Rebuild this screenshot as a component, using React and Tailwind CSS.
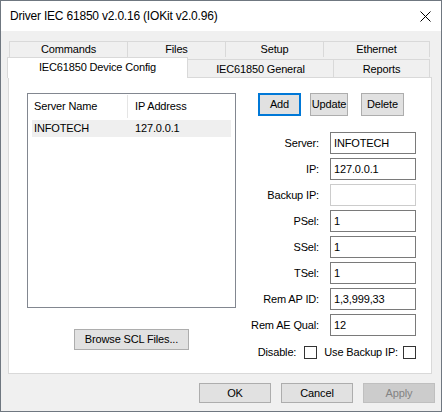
import React from "react";

const fields = [
  { label: "Server:", value: "INFOTECH" },
  { label: "IP:", value: "127.0.0.1" },
  { label: "Backup IP:", value: "", disabled: true },
  { label: "PSel:", value: "1" },
  { label: "SSel:", value: "1" },
  { label: "TSel:", value: "1" },
  { label: "Rem AP ID:", value: "1,3,999,33" },
  { label: "Rem AE Qual:", value: "12" },
];

const Field = ({ label, value, disabled }) => (
  <div className="flex items-center justify-end h-[22px]">
    <span className="whitespace-nowrap mr-[11px]">{label}</span>
    <div
      className={
        "shrink-0 w-[86px] h-[22px] bg-white border px-[3px] pt-[2px] leading-[16px] " +
        (disabled ? "border-[#cccccc]" : "border-[#7a7a7a]")
      }
    >
      {value}
    </div>
  </div>
);

const Checkbox = () => (
  <div className="shrink-0 w-[13px] h-[13px] border border-[#333333] bg-white" />
);

const App = () => {
  return (
    <div className="w-[442px] h-[412px] bg-[#f0f0f0] border border-[#6f7780] flex flex-col font-['Liberation_Sans',Arial,sans-serif] text-[11px] tracking-[-0.15px] text-black overflow-hidden">
      {/* title bar */}
      <div className="h-[30px] bg-white flex items-center justify-between pl-[9px] pr-[9px] shrink-0">
        <span className="text-[12px] tracking-[-0.2px]">Driver IEC 61850 v2.0.16 (IOKit v2.0.96)</span>
        <svg width="11" height="11" viewBox="0 0 11 11" className="mr-[1px]">
          <path d="M0.5 0.5 L10.5 10.5 M10.5 0.5 L0.5 10.5" stroke="#000" strokeWidth="1" />
        </svg>
      </div>

      {/* tabs */}
      <div className="pt-[10px] pl-[6px] flex flex-col">
        <div className="flex ml-[2px] h-[16px]">
          <div className="w-[119px] border border-b-0 border-[#d9d9d9] flex items-center justify-center">Commands</div>
          <div className="w-[98px] border border-b-0 border-l-0 border-[#d9d9d9] flex items-center justify-center">Files</div>
          <div className="w-[98px] border border-b-0 border-l-0 border-[#d9d9d9] flex items-center justify-center">Setup</div>
          <div className="w-[106px] border border-b-0 border-l-0 border-[#d9d9d9] flex items-center justify-center">Ethernet</div>
        </div>
        <div className="flex items-end h-[21px] -mb-px relative z-10">
          <div className="w-[181px] h-[21px] bg-white border border-b-0 border-[#d9d9d9] flex items-center justify-center pb-[2px]">
            IEC61850 Device Config
          </div>
          <div className="w-[146px] h-[19px] border border-b-0 border-l-0 border-[#d9d9d9] flex items-center justify-center">
            IEC61850 General
          </div>
          <div className="w-[96px] h-[19px] border border-b-0 border-l-0 border-[#d9d9d9] flex items-center justify-center">
            Reports
          </div>
        </div>

        {/* panel */}
        <div className="ml-[1px] w-[424px] h-[297px] bg-white border border-[#d9d9d9] flex pl-[18px] pt-[15px]">
          <div className="w-[209px] flex flex-col items-center">
            <div className="w-[209px] h-[215px] border border-[#828790] px-[4px] pt-[1px]">
              <div className="flex h-[23px] items-center">
                <div className="w-[96px] h-full flex items-center pl-[2px] border-r border-[#e5e5e5]">Server Name</div>
                <div className="pl-[7px]">IP Address</div>
              </div>
              <div className="flex h-[17px] items-center mt-[2px] bg-[#efefef]">
                <div className="w-[96px] pl-[2px]">INFOTECH</div>
                <div className="pl-[7px]">127.0.0.1</div>
              </div>
            </div>
            <div className="mt-[21px] w-[115px] h-[21px] bg-[#e1e1e1] border border-[#adadad] flex items-center justify-center">
              Browse SCL Files...
            </div>
          </div>

          <div className="ml-[22px] w-[158px] flex flex-col">
            <div className="flex h-[23px]">
              <div className="w-[43px] h-[23px] bg-[#e1e1e1] border-2 border-[#0078d7] flex items-center justify-center">Add</div>
              <div className="ml-[9px] w-[38px] h-[23px] bg-[#e1e1e1] border border-[#adadad] flex items-center justify-center">Update</div>
              <div className="ml-[13px] w-[43px] h-[23px] bg-[#e1e1e1] border border-[#adadad] flex items-center justify-center">Delete</div>
            </div>
            <div className="mt-[16px] flex flex-col gap-[4px]">
              {fields.map((f) => (
                <Field key={f.label} {...f} />
              ))}
            </div>
            <div className="mt-[10px] flex items-center justify-end h-[13px] whitespace-nowrap">
              <span className="mr-[8px]">Disable:</span>
              <Checkbox />
              <span className="ml-[7px] mr-[5px]">Use Backup IP:</span>
              <Checkbox />
            </div>
          </div>
        </div>
      </div>

      {/* bottom buttons */}
      <div className="flex justify-end gap-[10px] pt-[9px] pr-[6px]">
        <div className="w-[72px] h-[20px] bg-[#e1e1e1] border border-[#adadad] flex items-center justify-center">OK</div>
        <div className="w-[72px] h-[20px] bg-[#e1e1e1] border border-[#adadad] flex items-center justify-center">Cancel</div>
        <div className="w-[72px] h-[20px] bg-[#cccccc] border border-[#bfbfbf] text-[#838383] flex items-center justify-center">Apply</div>
      </div>
    </div>
  );
};

export default App;
